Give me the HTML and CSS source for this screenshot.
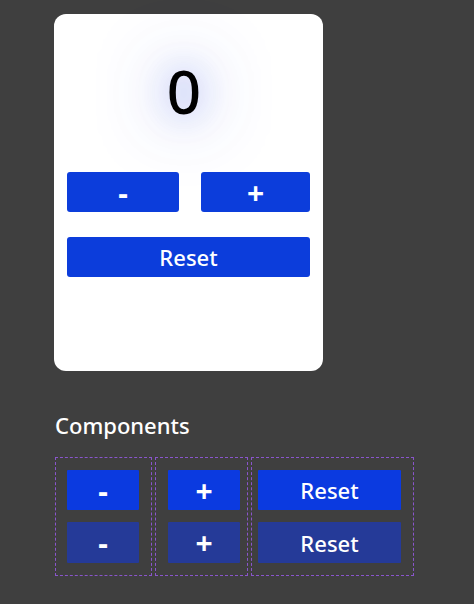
FILE: index.html
```html
<!DOCTYPE html>
<html>
  <head>
    <meta charset="utf-8" />
    <title>Counter</title>
    <link rel="stylesheet" href="styles.css">
  </head>
  <body>
    <div class="page-wrapper">
      <div class="card">
        <div class="counter"><span class="count">0</span></div>
        <div class="controls">
          <button class="btn btn-minus">-</button>
          <button class="btn btn-plus">+</button>
        </div>
        <button class="btn btn-reset">Reset</button>
      </div>

      <h2>Components</h2>

      <div class="components">
        <div class="story story-minus">
          <button class="cbtn">-</button>
          <button class="cbtn cbtn-dim">-</button>
        </div>
        <div class="story story-plus">
          <button class="cbtn">+</button>
          <button class="cbtn cbtn-dim">+</button>
        </div>
        <div class="story story-reset">
          <button class="cbtn cbtn-wide">Reset</button>
          <button class="cbtn cbtn-wide cbtn-dim">Reset</button>
        </div>
      </div>
    </div>
  </body>
</html>
```

FILE: styles.css
```css
html,
body {
  margin: 0;
  padding: 0;
  height: 100%;
  background: #3f3f3f;
  font-family: "Noto Sans", "Open Sans", sans-serif;
}

.page-wrapper {
  padding: 14px 0 0 54px;
}

/* Card */

.card {
  box-sizing: border-box;
  width: 269px;
  height: 357px;
  padding: 13px;
  background: #fff;
  border-radius: 12px;
}

.counter {
  box-sizing: border-box;
  height: 145px;
  padding: 23px 9px 0 0;
  text-align: center;
}

.count {
  font-size: 60px;
  line-height: 82px;
  font-weight: 500;
  color: #000;
  text-shadow: 0 0 30px rgba(40, 70, 220, 0.35), 0 0 70px rgba(40, 70, 220, 0.8);
}

.btn {
  display: block;
  height: 40px;
  border: none;
  border-radius: 3px;
  background: #0c3ddb;
  color: #fff;
  font-family: inherit;
  font-size: 22px;
  font-weight: 500;
  padding: 0;
}

.controls {
  display: flex;
  justify-content: space-between;
  margin-bottom: 25px;
}

.btn-minus {
  width: 112px;
  font-size: 30px;
  font-weight: 700;
}

.btn-plus {
  width: 109px;
  font-size: 30px;
  font-weight: 700;
}

.btn-reset {
  width: 243px;
}

/* Components */

h2 {
  margin: 39px 0 17px 1px;
  font-size: 22px;
  line-height: 30px;
  font-weight: 500;
  color: #fff;
}

.components {
  display: flex;
  gap: 3px;
}

.story {
  display: flex;
  flex-direction: column;
  gap: 12px;
  padding: 12px 12px 12px 11px;
  border: 1px dashed #8a55cc;
}

.story-minus {
  margin-left: 1px;
}

.story-plus {
  padding-left: 12px;
  padding-right: 7px;
}

.story-reset {
  padding-left: 6px;
}

.cbtn {
  width: 72px;
  height: 40px;
  border: none;
  border-radius: 1px;
  background: #0b3ae0;
  color: #fff;
  font-family: inherit;
  font-size: 30px;
  font-weight: 700;
  padding: 0;
}

.cbtn-wide {
  width: 143px;
  font-size: 22px;
  font-weight: 500;
}

.cbtn-dim {
  height: 41px;
  background: #253a98;
}
```
